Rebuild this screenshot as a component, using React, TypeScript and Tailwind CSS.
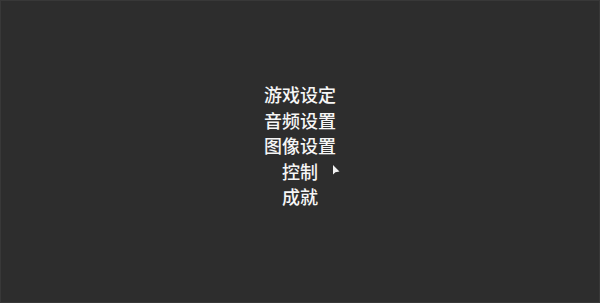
import React from "react";

const items = ["游戏设定", "音频设置", "图像设置", "控制", "成就"];

const Cursor = () => (
  <svg
    className="absolute left-[331px] top-[163px]"
    width="9"
    height="12"
    viewBox="0 0 9 12"
  >
    <path d="M1 1 L1 10.5 L3.4 8.2 L7.5 7.6 Z" fill="#f2f2f2" />
  </svg>
);

export default function App() {
  return (
    <div
      className="relative w-[600px] h-[303px] bg-[#2d2d2d] border border-[#383838] overflow-hidden"
      style={{ fontFamily: '"Noto Sans CJK SC", "Noto Sans", sans-serif' }}
    >
      <ul className="flex flex-col items-center pt-[81px] text-[18px] leading-[25.5px] font-medium text-[#f6f6f6]">
        {items.map((item) => (
          <li key={item}>{item}</li>
        ))}
      </ul>
      <Cursor />
    </div>
  );
}
